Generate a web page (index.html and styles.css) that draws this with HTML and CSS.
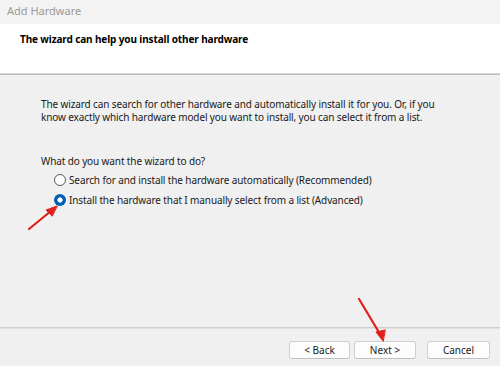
FILE: index.html
```html
<!DOCTYPE html>
<html>
<head>
<meta charset="utf-8">
<link rel="stylesheet" href="styles.css">
</head>
<body>
<div class="window">
  <div class="titlebar">Add Hardware</div>
  <div class="header">
    <div class="header-title">The wizard can help you install other hardware</div>
  </div>
  <div class="content">
    <p class="intro">The wizard can search for other hardware and automatically install it for you. Or, if you know exactly which hardware model you want to install, you can select it from a list.</p>
    <p class="question">What do you want the wizard to do?</p>
    <div class="options">
      <label class="option"><span class="radio"></span><span>Search for and install the hardware automatically (Recommended)</span></label>
      <label class="option"><span class="radio checked"></span><span>Install the hardware that I manually select from a list (Advanced)</span></label>
    </div>
  </div>
  <div class="footer">
    <button class="btn back">&lt; Back</button>
    <button class="btn">Next &gt;</button>
    <button class="btn cancel">Cancel</button>
  </div>
  <svg class="annot" width="500" height="366" viewBox="0 0 500 366">
    <g stroke="#e0201c" stroke-width="2.2" stroke-linecap="round" fill="#e0201c">
      <line x1="29" y1="229" x2="51" y2="211"/>
      <polygon points="57,206 46,210 52,216" stroke-width="1"/>
      <line x1="359" y1="299" x2="380" y2="334"/>
      <polygon points="383,341 376,332 385,330" stroke-width="1"/>
    </g>
  </svg>
</div>
</body>
</html>
```
FILE: styles.css
```css
html, body {
  margin: 0;
  padding: 0;
}
body {
  width: 500px;
  height: 366px;
  overflow: hidden;
  font-family: "Noto Sans", "Open Sans", sans-serif;
  font-size: 10px;
  letter-spacing: -0.12px;
  color: #1a1a1a;
}
.window {
  position: relative;
  width: 500px;
  height: 366px;
  display: flex;
  flex-direction: column;
  background: #f0f0f0;
}
.titlebar {
  height: 24px;
  background: #f3f3f3;
  color: #9a9a9a;
  font-size: 11px;
  line-height: 22px;
  padding-left: 7px;
  letter-spacing: 0;
}
.header {
  height: 50px;
  background: #fff;
  border-bottom: 1px solid #d6d6d6;
  box-shadow: 0 1px 0 #bcbcbc;
  padding-left: 20px;
  box-sizing: border-box;
}
.header-title {
  font-weight: bold;
  color: #000;
  margin-top: 8px;
  line-height: 14px;
}
.content {
  flex: 1;
  padding: 24px 0 0 41px;
  border-bottom: 1px solid #cdcdcd;
  box-shadow: 0 1px 0 #e2e2e2;
}
.intro {
  margin: 0;
  width: 400px;
  line-height: 13px;
}
.question {
  margin: 30px 0 0 0;
  line-height: 14px;
  height: 14px;
}
.options {
  display: flex;
  flex-direction: column;
  gap: 6px;
  margin-top: 5px;
  padding-left: 13px;
}
.option {
  display: flex;
  align-items: center;
  gap: 3px;
  height: 14px;
  line-height: 14px;
}
.radio {
  flex: none;
  width: 10px;
  height: 10px;
  border: 1px solid #555;
  border-radius: 50%;
  background: #fff;
  box-sizing: content-box;
}
.radio.checked {
  width: 12px;
  height: 12px;
  border: none;
  background: radial-gradient(circle, #fff 0 2.4px, #005fb8 2.8px);
}
.footer {
  height: 38px;
  display: flex;
  align-items: flex-start;
  padding: 13px 0 0 289px;
  box-sizing: border-box;
}
.btn {
  width: 62px;
  height: 18px;
  padding: 0;
  background: #fdfdfd;
  border: 1px solid #d0d0d0;
  border-bottom-color: #c0c0c0;
  border-radius: 3px;
  font-family: inherit;
  font-size: 10px;
  color: #1a1a1a;
  margin-right: 4px;
}
.btn.back { width: 61px; }
.btn.cancel { margin-left: 7px; width: 63px; }
.annot {
  position: absolute;
  left: 0;
  top: 0;
  pointer-events: none;
}
```
